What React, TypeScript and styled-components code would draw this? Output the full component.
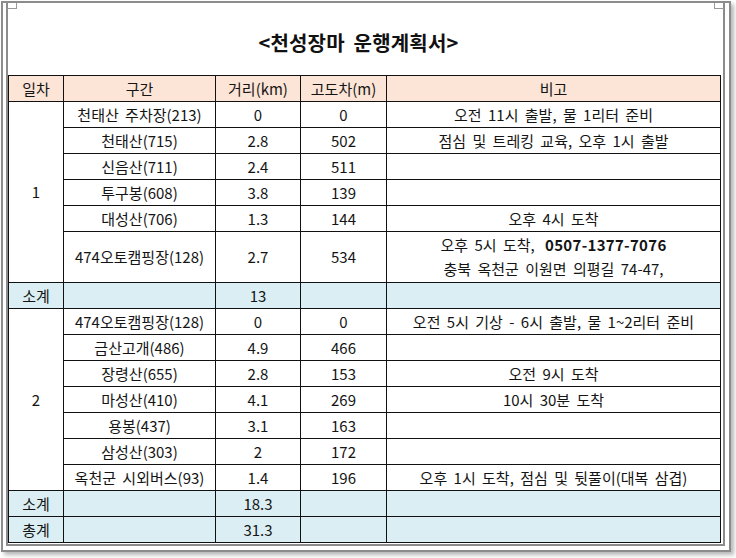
import React from 'react'
import styled, { createGlobalStyle } from 'styled-components'

const GlobalStyle = createGlobalStyle`
  html, body {
    margin : 0;
    padding : 0;
    background : #ffffff;
  }
  body {
    width : 736px;
    height : 558px;
    overflow : hidden;
    font-family : "Noto Sans CJK KR", "Noto Sans", sans-serif;
    color : #141414;
  }
`

const Frame = styled.div`
  box-sizing : border-box;
  margin : 1px 0 0 1px;
  width : 730px;
  height : 551px;
  border : 2px solid #8c8c8c;
  padding : 0 4px 4px 3px;
  background : #ffffff;
  box-shadow : 3px 3px 4px rgba(0, 0, 0, 0.28);
`

const Sheet = styled.div`
  position : relative;
  box-sizing : border-box;
  height : 100%;
  border : 2px solid #8c8c8c;
  border-top : none;
`

const CornerMark = styled.span<{ $side: 'left' | 'right' }>`
  position : absolute;
  top : 0;
  ${(p) => (p.$side === 'left' ? 'left : -1px;' : 'right : -1px;')}
  width : 9px;
  height : 5px;
  border-bottom : 1px solid #9a9a9a;
  ${(p) => (p.$side === 'left' ? 'border-right : 1px solid #9a9a9a;' : 'border-left : 1px solid #9a9a9a;')}
`

const Title = styled.h1`
  box-sizing : border-box;
  margin : 0;
  height : 72px;
  padding : 6px 14px 0 0;
  display : flex;
  align-items : center;
  justify-content : center;
  font-size : 20px;
  font-weight : 700;
  color : #111;
  letter-spacing : 0.2px;
  word-spacing : 4px;
`

const PlanTable = styled.table`
  border-collapse : collapse;
  table-layout : fixed;
  width : 713px;
  font-size : 15px;
  line-height : 24px;
  word-spacing : 3px;
`

const Row = styled.tr<{ $tall?: boolean }>`
  height : ${(p) => (p.$tall ? '51px' : '26px')};
`

const Cell = styled.td<{ $tone?: 'head' | 'sum' }>`
  border : 1px solid #111;
  padding : 0;
  text-align : center;
  vertical-align : middle;
  white-space : nowrap;
  background : ${(p) => (p.$tone === 'head' ? '#fce4d6' : p.$tone === 'sum' ? '#daeef3' : '#ffffff')};
`

const Phone = styled.b`
  font-weight : 700;
  letter-spacing : 0.3px;
  margin-left : 4px;
`

type Leg = [string, string, string, React.ReactNode]

const day1: Leg[] = [
  ['천태산 주차장(213)', '0', '0', '오전 11시 출발, 물 1리터 준비'],
  ['천태산(715)', '2.8', '502', '점심 및 트레킹 교육, 오후 1시 출발'],
  ['신음산(711)', '2.4', '511', ''],
  ['투구봉(608)', '3.8', '139', ''],
  ['대성산(706)', '1.3', '144', '오후 4시 도착'],
  [
    '474오토캠핑장(128)',
    '2.7',
    '534',
    <>
      오후 5시 도착, <Phone>0507-1377-7076</Phone>
      <br />
      충북 옥천군 이원면 의평길 74-47,
    </>,
  ],
]

const day2: Leg[] = [
  ['474오토캠핑장(128)', '0', '0', '오전 5시 기상 - 6시 출발, 물 1~2리터 준비'],
  ['금산고개(486)', '4.9', '466', ''],
  ['장령산(655)', '2.8', '153', '오전 9시 도착'],
  ['마성산(410)', '4.1', '269', '10시 30분 도착'],
  ['용봉(437)', '3.1', '163', ''],
  ['삼성산(303)', '2', '172', ''],
  ['옥천군 시외버스(93)', '1.4', '196', '오후 1시 도착, 점심 및 뒷풀이(대복 삼겹)'],
]

function DayRows({ day, legs }: { day: string; legs: Leg[] }) {
  return (
    <>
      {legs.map((leg, i) => (
        <Row key={i} $tall={i === 5 && day === '1'}>
          {i === 0 && <Cell rowSpan={legs.length}>{day}</Cell>}
          <Cell>{leg[0]}</Cell>
          <Cell>{leg[1]}</Cell>
          <Cell>{leg[2]}</Cell>
          <Cell>{leg[3]}</Cell>
        </Row>
      ))}
    </>
  )
}

function SumRow({ label, value }: { label: string; value: string }) {
  return (
    <Row>
      <Cell $tone="sum">{label}</Cell>
      <Cell $tone="sum"></Cell>
      <Cell $tone="sum">{value}</Cell>
      <Cell $tone="sum"></Cell>
      <Cell $tone="sum"></Cell>
    </Row>
  )
}

export default function App() {
  return (
    <>
      <GlobalStyle />
      <Frame>
        <Sheet>
          <CornerMark $side="left" />
          <CornerMark $side="right" />
          <Title>&lt;천성장마 운행계획서&gt;</Title>
          <PlanTable>
            <colgroup>
              <col style={{ width: 55 }} />
              <col style={{ width: 152 }} />
              <col style={{ width: 85 }} />
              <col style={{ width: 86 }} />
              <col />
            </colgroup>
            <thead>
              <Row>
                <Cell as="th" $tone="head" style={{ fontWeight: 400 }}>일차</Cell>
                <Cell as="th" $tone="head" style={{ fontWeight: 400 }}>구간</Cell>
                <Cell as="th" $tone="head" style={{ fontWeight: 400 }}>거리(km)</Cell>
                <Cell as="th" $tone="head" style={{ fontWeight: 400 }}>고도차(m)</Cell>
                <Cell as="th" $tone="head" style={{ fontWeight: 400 }}>비고</Cell>
              </Row>
            </thead>
            <tbody>
              <DayRows day="1" legs={day1} />
              <SumRow label="소계" value="13" />
              <DayRows day="2" legs={day2} />
              <SumRow label="소계" value="18.3" />
              <SumRow label="총계" value="31.3" />
            </tbody>
          </PlanTable>
        </Sheet>
      </Frame>
    </>
  )
}
